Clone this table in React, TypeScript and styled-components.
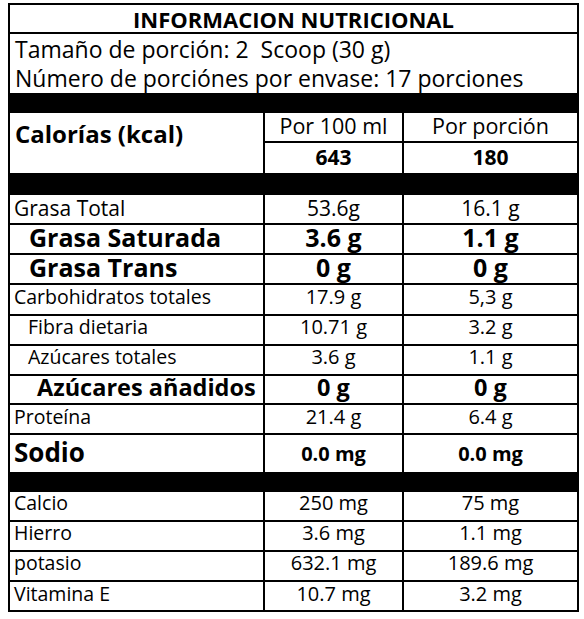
import React from 'react'
import styled, { createGlobalStyle } from 'styled-components'

type Nutrient = {
  label: string
  per100: string
  perServing: string
  h: number
  size: number
  valueSize: number
  bold?: boolean
  indent?: number
  lift?: number
}

const fats: Nutrient[] = [
  { label: 'Grasa Total', per100: '53.6g', perServing: '16.1 g', h: 28, size: 21, valueSize: 21, lift: 1 },
  { label: 'Grasa Saturada', per100: '3.6 g', perServing: '1.1 g', h: 28, size: 25, valueSize: 25, bold: true, indent: 15, lift: 4 },
  { label: 'Grasa Trans', per100: '0 g', perServing: '0 g', h: 28, size: 25, valueSize: 25, bold: true, indent: 15, lift: 4 },
  { label: 'Carbohidratos totales', per100: '17.9 g', perServing: '5,3 g', h: 29, size: 19.5, valueSize: 20, lift: 6 },
  { label: 'Fibra dietaria', per100: '10.71 g', perServing: '3.2 g', h: 28, size: 19.5, valueSize: 20, indent: 14, lift: 6 },
  { label: 'Azúcares totales', per100: '3.6 g', perServing: '1.1 g', h: 28, size: 19.5, valueSize: 20, indent: 14, lift: 6 },
  { label: 'Azúcares añadidos', per100: '0 g', perServing: '0 g', h: 27, size: 23.5, valueSize: 23.5, bold: true, indent: 23, lift: 6 },
  { label: 'Proteína', per100: '21.4 g', perServing: '6.4 g', h: 28, size: 19.5, valueSize: 20, lift: 4 },
]

const minerals: Nutrient[] = [
  { label: 'Calcio', per100: '250 mg', perServing: '75 mg', h: 28, size: 19.5, valueSize: 20, lift: 6 },
  { label: 'Hierro', per100: '3.6 mg', perServing: '1.1 mg', h: 28, size: 19.5, valueSize: 20, lift: 7 },
  { label: 'potasio', per100: '632.1 mg', perServing: '189.6 mg', h: 28, size: 19.5, valueSize: 20, lift: 6 },
  { label: 'Vitamina E', per100: '10.7 mg', perServing: '3.2 mg', h: 28, size: 19.5, valueSize: 20, lift: 5 },
]

const GlobalStyle = createGlobalStyle`
  body {
    margin: 0;
    background: #fff;
    font-family: "Open Sans", "Liberation Sans", sans-serif;
    color: #000;
  }
`

const Page = styled.div`
  padding: 3px 0 0 8px;
`

const Table = styled.div`
  width: 571px;
  border: 2px solid #000;
  box-sizing: border-box;
`

const Title = styled.div`
  height: 27px;
  border-bottom: 2px solid #000;
  display: flex;
  align-items: center;
  justify-content: center;
  font-size: 22px;
  font-weight: 700;
  line-height: 1;
`

const Info = styled.div`
  height: 59px;
  padding-left: 5px;
  display: flex;
  flex-direction: column;
  justify-content: center;
  font-size: 23px;
  line-height: 29px;
`

const Band = styled.div<{ h: number }>`
  height: ${p => p.h}px;
  background: #000;
`

const Grid = styled.div`
  display: grid;
  grid-template-columns: 253px 139px 1fr;
`

const CaloriesBlock = styled(Grid)`
  grid-template-rows: 30px 30px;
`

const CaloriesLabel = styled.div`
  grid-row: 1 / span 2;
  padding: 4px 0 0 5px;
  font-size: 24px;
  font-weight: 700;
`

const HeadCell = styled.div<{ line?: boolean }>`
  border-left: 2px solid #000;
  border-bottom: ${p => (p.line ? '2px solid #000' : 'none')};
  display: flex;
  align-items: center;
  justify-content: center;
  padding-bottom: 3px;
  font-size: 21.5px;
  line-height: 1;
`

const TotalCell = styled(HeadCell)`
  padding-bottom: 1px;
  font-size: 21px;
  font-weight: 700;
`

const Row = styled(Grid)<{ h: number; last?: boolean }>`
  height: ${p => p.h}px;
  border-bottom: ${p => (p.last ? 'none' : '2px solid #000')};
`

const Label = styled.div<{ size: number; bold?: boolean; indent: number; lift: number }>`
  display: flex;
  align-items: center;
  padding: 0 0 ${p => p.lift}px ${p => p.indent + 4}px;
  font-size: ${p => p.size}px;
  font-weight: ${p => (p.bold ? 700 : 400)};
  line-height: 1;
  white-space: nowrap;
`

const Value = styled.div<{ size: number; bold?: boolean; lift: number }>`
  border-left: 2px solid #000;
  display: flex;
  align-items: center;
  justify-content: center;
  padding-bottom: ${p => p.lift}px;
  font-size: ${p => p.size}px;
  font-weight: ${p => (p.bold ? 700 : 400)};
  line-height: 1;
  white-space: nowrap;
`

const NutrientRow: React.FC<{ item: Nutrient; last?: boolean }> = ({ item, last }) => {
  const lift = item.lift ?? 4
  return (
    <Row h={item.h} last={last}>
      <Label size={item.size} bold={item.bold} indent={item.indent ?? 0} lift={lift}>
        {item.label}
      </Label>
      <Value size={item.valueSize} bold={item.bold} lift={lift}>{item.per100}</Value>
      <Value size={item.valueSize} bold={item.bold} lift={lift}>{item.perServing}</Value>
    </Row>
  )
}

export default function App() {
  return (
    <Page>
      <GlobalStyle />
      <Table>
        <Title>INFORMACION NUTRICIONAL</Title>
        <Info>
          <div>Tamaño de porción: 2&nbsp; Scoop (30 g)</div>
          <div>Número de porciónes por envase: 17 porciones</div>
        </Info>
        <Band h={20} />
        <CaloriesBlock>
          <CaloriesLabel>Calorías (kcal)</CaloriesLabel>
          <HeadCell line>Por 100 ml</HeadCell>
          <HeadCell line>Por porción</HeadCell>
          <TotalCell>643</TotalCell>
          <TotalCell>180</TotalCell>
        </CaloriesBlock>
        <Band h={22} />
        {fats.map(item => (
          <NutrientRow key={item.label} item={item} />
        ))}
        <Row h={37} last>
          <Label size={26} bold indent={0} lift={4}>Sodio</Label>
          <Value size={20} bold lift={0}>0.0 mg</Value>
          <Value size={20} bold lift={0}>0.0 mg</Value>
        </Row>
        <Band h={20} />
        {minerals.map((item, i) => (
          <NutrientRow key={item.label} item={item} last={i === minerals.length - 1} />
        ))}
      </Table>
    </Page>
  )
}
